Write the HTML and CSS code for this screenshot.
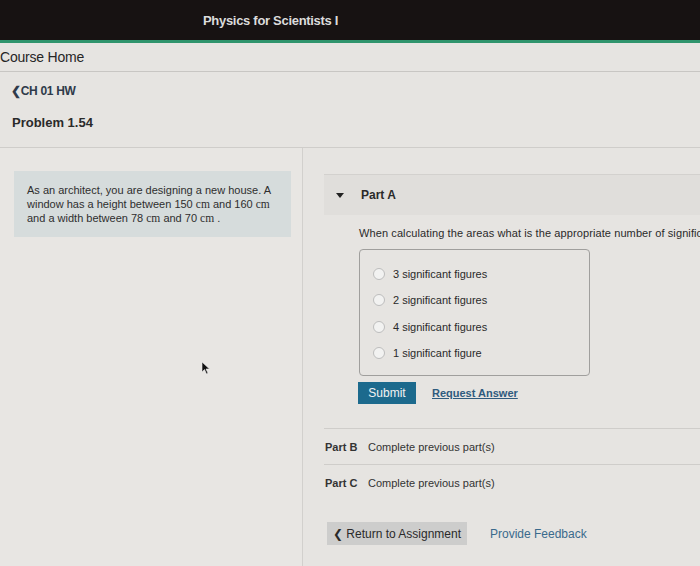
FILE: index.html
```html
<!DOCTYPE html>
<html lang="en">
<head>
    <meta charset="UTF-8">
    <title>Physics for Scientists I - Problem 1.54</title>
    <link rel="stylesheet" href="styles.css">
</head>
<body>
    <header class="topbar">
        <span class="course-title">Physics for Scientists I</span>
    </header>

    <div class="course-home">Course Home</div>

    <div class="crumbs">
        <a class="back-link">&#10094;CH 01 HW</a>
        <h2 class="problem-title">Problem 1.54</h2>
    </div>

    <div class="main">
        <div class="left-col">
            <div class="problem-text">
                <div>As an architect, you are designing a new house. A</div>
                <div>window has a height between 150 <span class="unit">cm</span> and 160 <span class="unit">cm</span></div>
                <div>and a width between 78 <span class="unit">cm</span> and 70 <span class="unit">cm</span> .</div>
            </div>
            <svg class="cursor" width="10" height="14" viewBox="0 0 10 14">
                <path d="M1 1 L1 11 L3.5 8.5 L5.5 13 L7 12.3 L5 8 L8.5 8 Z" fill="#111" stroke="#eee" stroke-width="0.6"/>
            </svg>
        </div>

        <div class="right-col">
            <div class="part-head">
                <span class="caret"></span>
                <span class="part-name">Part A</span>
            </div>

            <div class="part-body">
                <p class="question">When calculating the areas what is the appropriate number of significant figures?</p>
                <div class="choices">
                    <label class="choice"><span class="radio"></span>3 significant figures</label>
                    <label class="choice"><span class="radio"></span>2 significant figures</label>
                    <label class="choice"><span class="radio"></span>4 significant figures</label>
                    <label class="choice"><span class="radio"></span>1 significant figure</label>
                </div>
                <div class="actions">
                    <button class="submit-btn">Submit</button>
                    <a class="request-link">Request Answer</a>
                </div>
            </div>

            <div class="part-row"><b>Part B</b><span>Complete previous part(s)</span></div>
            <div class="part-row"><b>Part C</b><span>Complete previous part(s)</span></div>

            <div class="footer-actions">
                <button class="return-btn">&#10094; Return to Assignment</button>
                <a class="feedback-link">Provide Feedback</a>
            </div>
        </div>
    </div>
</body>
</html>
```

FILE: styles.css
```css
body {
    font-family: 'Liberation Sans', Arial, sans-serif;
    margin: 0;
    width: 700px;
    height: 566px;
    overflow: hidden;
    background-color: #e6e4e1;
    color: #2b2b2b;
}

.topbar {
    height: 40px;
    background-color: #171212;
    border-bottom: 3px solid #2f946c;
    display: flex;
    align-items: center;
    padding-left: 203px;
}

.course-title {
    color: #dcdcdc;
    font-size: 13px;
    font-weight: bold;
    letter-spacing: -0.3px;
}

.course-home {
    height: 28px;
    line-height: 28px;
    font-size: 14px;
    color: #262626;
    border-bottom: 1px solid #c8c6c3;
    letter-spacing: -0.2px;
}

.crumbs {
    padding: 0 0 0 11px;
    height: 75px;
    border-bottom: 1px solid #cfcdca;
}

.back-link {
    display: block;
    padding-top: 12px;
    font-size: 12px;
    font-weight: bold;
    color: #2f3a4a;
    letter-spacing: -0.3px;
}

.problem-title {
    margin: 17px 0 0 1px;
    font-size: 13px;
    color: #2a2a2a;
}

.main {
    display: flex;
}

.left-col {
    position: relative;
    width: 303px;
    height: 420px;
    border-right: 1px solid #d2d0cd;
    padding-top: 23px;
    box-sizing: border-box;
    background-color: #e8e6e3;
}

.problem-text {
    margin-left: 14px;
    width: 277px;
    height: 66px;
    box-sizing: border-box;
    padding: 12px 8px 0 13px;
    background-color: #d6dcdc;
    font-size: 11px;
    line-height: 14px;
    color: #2e2e2e;
    white-space: nowrap;
}

.unit {
    font-family: 'Liberation Serif', 'Times New Roman', serif;
    font-size: 11.5px;
    line-height: 1;
}

.cursor {
    position: absolute;
    left: 201px;
    top: 213px;
}

.right-col {
    flex: 1;
    padding: 26px 0 0 21px;
    overflow: hidden;
}

.part-head {
    height: 40px;
    display: flex;
    align-items: center;
    background-color: #e0dedb;
    border-top: 1px solid #d3d1ce;
}

.caret {
    width: 0;
    height: 0;
    margin-left: 12px;
    border-left: 4px solid transparent;
    border-right: 4px solid transparent;
    border-top: 5px solid #222;
}

.part-name {
    margin-left: 17px;
    font-size: 12px;
    font-weight: bold;
    color: #2a2a2a;
}

.part-body {
    padding-left: 35px;
}

.question {
    margin: 12px 0 10px 0;
    font-size: 11px;
    letter-spacing: 0.1px;
    white-space: nowrap;
    color: #2a2a2a;
}

.choices {
    width: 231px;
    height: 127px;
    box-sizing: border-box;
    border: 1px solid #a09f9d;
    border-radius: 4px;
    padding-top: 17px;
    display: flex;
    flex-direction: column;
    gap: 13.5px;
}

.choice {
    display: flex;
    align-items: center;
    font-size: 11px;
    height: 13px;
    color: #2a2a2a;
}

.radio {
    width: 10px;
    height: 10px;
    margin: 0 8px 0 13px;
    border: 1px solid #bdbdbd;
    border-radius: 50%;
    background-color: #f2f2f1;
}

.actions {
    display: flex;
    align-items: center;
    margin-top: 6px;
}

.submit-btn {
    width: 58px;
    height: 22px;
    border: none;
    background-color: #1c6a8d;
    color: #f2f2f2;
    font-family: inherit;
    font-size: 12px;
    margin-left: -1px;
}

.request-link {
    margin-left: 16px;
    font-size: 11px;
    font-weight: bold;
    color: #2f5b7e;
    text-decoration: underline;
}

.part-row {
    display: flex;
    align-items: center;
    height: 35px;
    border-top: 1px solid #cfcdca;
    font-size: 11px;
    color: #333;
    padding-left: 1px;
}

.part-body + .part-row {
    margin-top: 24px;
}

.part-row b {
    width: 43px;
    color: #333;
}

.footer-actions {
    display: flex;
    align-items: center;
    margin-top: 22px;
    padding-left: 3px;
}

.return-btn {
    width: 140px;
    height: 23px;
    padding: 0;
    border: none;
    background-color: #cdcdcc;
    color: #2a2a2a;
    font-family: inherit;
    font-size: 12px;
    white-space: nowrap;
}

.feedback-link {
    margin-left: 23px;
    font-size: 12px;
    color: #3a6a8c;
}
```
